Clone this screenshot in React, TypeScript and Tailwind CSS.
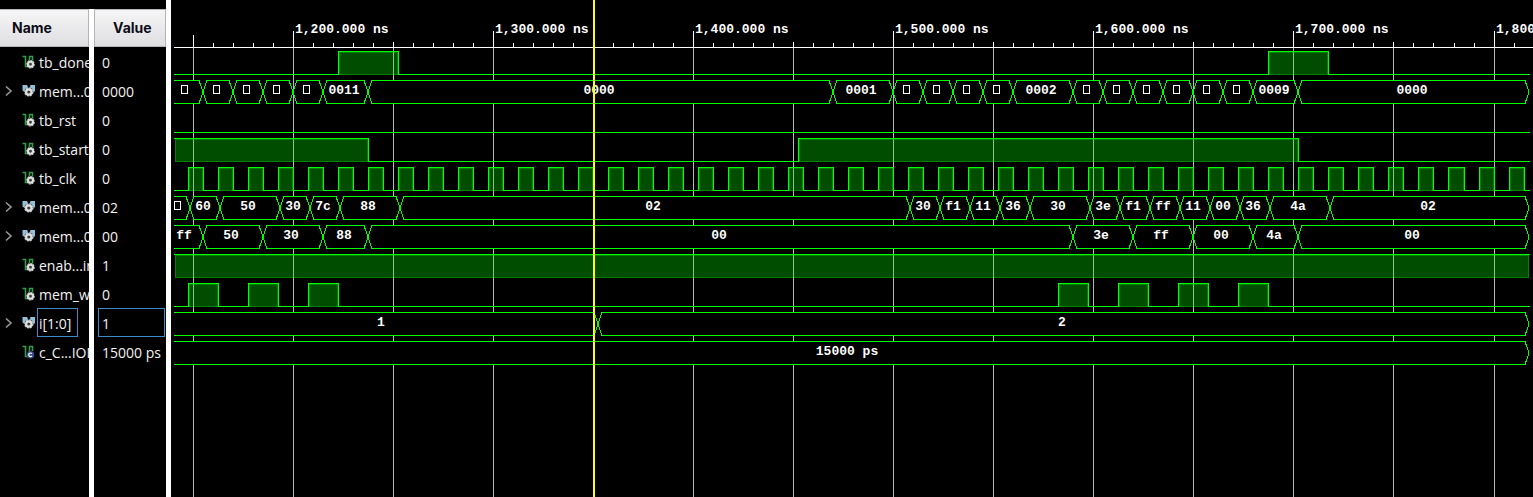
import React from "react";

type Kind = "wire" | "bus" | "const";

type Signal = {
  name: string;
  value: string;
  kind: Kind;
  selected?: boolean;
  pulses?: [number, number][];
  edges?: number[];
  values?: string[];
};

const START = 174;
const END = 1529;
const BOX = "";

const clockPulses: [number, number][] = Array.from({ length: 45 }, (_, k) => {
  const x = 188 + 30 * k + (k > 42 ? 1 : 0);
  return [x, k === 42 ? x + 16 : x + 15];
});

const signals: Signal[] = [
  { name: "tb_done", value: "0", kind: "wire", pulses: [[338, 398], [1268, 1328]] },
  {
    name: "mem...0",
    value: "0000",
    kind: "bus",
    edges: [203, 233, 263, 293, 323, 368, 833, 893, 923, 953, 983, 1013, 1073, 1103, 1133, 1163, 1193, 1223, 1253, 1298],
    values: [BOX, BOX, BOX, BOX, BOX, "0011", "0000", "0001", BOX, BOX, BOX, BOX, "0002", BOX, BOX, BOX, BOX, BOX, BOX, "0009", "0000"],
  },
  { name: "tb_rst", value: "0", kind: "wire", pulses: [] },
  { name: "tb_start", value: "0", kind: "wire", pulses: [[START, 368], [798, 1298]] },
  { name: "tb_clk", value: "0", kind: "wire", pulses: clockPulses },
  {
    name: "mem...0",
    value: "02",
    kind: "bus",
    edges: [190, 220, 280, 310, 340, 400, 910, 940, 970, 1000, 1030, 1090, 1120, 1150, 1180, 1210, 1240, 1270, 1330],
    values: [BOX, "60", "50", "30", "7c", "88", "02", "30", "f1", "11", "36", "30", "3e", "f1", "ff", "11", "00", "36", "4a", "02"],
  },
  {
    name: "mem...0",
    value: "00",
    kind: "bus",
    edges: [203, 263, 323, 368, 1073, 1133, 1193, 1253, 1298],
    values: ["ff", "50", "30", "88", "00", "3e", "ff", "00", "4a", "00"],
  },
  { name: "enab...in", value: "1", kind: "wire", pulses: [[START, END]] },
  {
    name: "mem_wr",
    value: "0",
    kind: "wire",
    pulses: [[188, 218], [248, 278], [308, 338], [1058, 1088], [1118, 1148], [1178, 1208], [1238, 1268]],
  },
  { name: "i[1:0]", value: "1", kind: "bus", selected: true, edges: [598], values: ["1", "2"] },
  { name: "c_C...IOD", value: "15000 ps", kind: "const", edges: [], values: ["15000 ps"] },
];

function SignalIcon({ kind }: { kind: Kind }) {
  if (kind === "bus") {
    return (
      <svg className="h-[14px] w-[14px] shrink-0" viewBox="0 0 14 14" aria-hidden="true">
        <path d="M0.5 1H5L6.5 4V8H2.5L0.5 6.5Z" fill="#93bfd8" />
        <path d="M8.5 1H13V7L11 9L7.5 8V4Z" fill="#93bfd8" />
        <circle cx="6.8" cy="8" r="4.6" fill="#3a3f44" />
        <circle cx="6.8" cy="8" r="4" fill="none" stroke="#c4c4c4" strokeWidth="1.2" strokeDasharray="1.8 1.3" />
        <circle cx="6.8" cy="8" r="2.7" fill="none" stroke="#e0e0e0" strokeWidth="2.2" />
      </svg>
    );
  }
  return (
    <svg className="h-[14px] w-[14px] shrink-0" viewBox="0 0 14 14" aria-hidden="true">
      <path d="M0.5 1.5H3.5V11.5H7.5V1.5H10.5V6" fill="none" stroke="#349c4a" strokeWidth="1.6" />
      {kind === "const" ? (
        <>
          <circle cx="8.5" cy="9.8" r="3.8" fill="#3a4c8c" />
          <path d="M9.9 8.6A1.8 1.8 0 1 0 9.9 11" fill="none" stroke="#fff" strokeWidth="1.2" />
        </>
      ) : (
        <>
          <circle cx="8.5" cy="9.3" r="4.2" fill="#3a3f3a" />
          <circle cx="8.5" cy="9.3" r="3.7" fill="none" stroke="#c4c4c4" strokeWidth="1.1" strokeDasharray="1.6 1.2" />
          <circle cx="8.5" cy="9.3" r="2.5" fill="none" stroke="#e0e0e0" strokeWidth="2.1" />
        </>
      )}
    </svg>
  );
}

function SignalTable() {
  const head =
    "overflow-hidden whitespace-nowrap border border-[#b4b4b8] bg-linear-to-b from-[#f5f5f5] to-[#dfdfe2] font-['Inter',sans-serif] text-sm font-bold text-[#0c0c18]";
  return (
    <table className="h-full w-[166px] table-fixed border-separate border-spacing-0 font-['Open_Sans',sans-serif] text-sm text-[#f2f2f2]">
      <thead>
        <tr className="h-[38px]">
          <th scope="col" className="w-[94px] border-r-[5px] border-white p-0">
            <div className={`${head} flex h-[38px] items-center border-l-0 pl-3`}>Name</div>
          </th>
          <th scope="col" className="w-[72px] p-0">
            <div className={`${head} flex h-[38px] items-center pl-[18px]`}>Value</div>
          </th>
        </tr>
      </thead>
      <tbody>
        {signals.map((s, i) => (
          <tr key={i} className="h-[29px]">
            <td className="border-r-[5px] border-white p-0">
              <div className="flex h-[29px] items-center overflow-hidden whitespace-nowrap">
                <span className="flex w-[22px] shrink-0 pl-[5px]">
                  {s.kind === "bus" && (
                    <button type="button" aria-label="Expand" className="block">
                      <svg className="block h-3 w-2" viewBox="0 0 8 12" aria-hidden="true">
                        <path d="M1 1.5L6 6L1 10.5" fill="none" stroke="#9a9a9a" strokeWidth="1.6" />
                      </svg>
                    </button>
                  )}
                </span>
                <SignalIcon kind={s.kind} />
                <span
                  className={`ml-px flex h-[29px] shrink-0 items-center border pl-px pr-1.5 pt-0.5 ${
                    s.selected ? "border-[#3c8ccc]" : "border-transparent"
                  }`}
                >
                  {s.name}
                </span>
              </div>
            </td>
            <td className="p-0 pl-1 pr-px">
              <div
                className={`flex h-[29px] items-center whitespace-nowrap border pl-[3px] pt-0.5 ${
                  s.selected ? "border-[#3c8ccc]" : "border-transparent"
                }`}
              >
                {s.value}
              </div>
            </td>
          </tr>
        ))}
        <tr aria-hidden="true">
          <td className="border-r-[5px] border-white p-0" />
          <td className="p-0" />
        </tr>
      </tbody>
    </table>
  );
}

const gridX = (n: number) => 193 + 100 * n + (n >= 13 ? 1 : 0);

function Ruler() {
  const ticks = Array.from({ length: 67 }, (_, k) => k).filter((k) => k % 5 !== 0);
  return (
    <g>
      {Array.from({ length: 14 }, (_, n) => {
        const x = gridX(n);
        const top = n === 0 ? 35 : n % 2 === 1 ? 31 : 42;
        return (
          <g key={n}>
            <rect x={x} y={top} width={1} height={48 - top} fill="#fff" />
            <rect x={x} y={48} width={1} height="100%" fill="#b8b8b8" />
            {n % 2 === 1 && (
              <text x={x + 2} y={33} fill="#fff">
                {`1,${2 + (n - 1) / 2}00.000 ns`}
              </text>
            )}
          </g>
        );
      })}
      {ticks.map((k) => (
        <rect key={k} x={193 + 20 * k + (k >= 63 ? 1 : 0)} y={43} width={1} height={4} fill="#fff" />
      ))}
      <rect x={START} y={47} width="100%" height={1} fill="#fff" />
    </g>
  );
}

function WireTrace({ top, pulses }: { top: number; pulses: [number, number][] }) {
  const low = top + 23;
  let d = "";
  let x = START;
  pulses.forEach(([a, b]) => {
    if (a > x) d += `M${x} ${low + 0.5}H${a + 0.5}V${top + 0.5}`;
    else d += `M${a} ${top + 0.5}`;
    d += `H${b + 0.5}`;
    if (b < END) d += `V${low + 0.5}`;
    x = b;
  });
  if (x < END) d += `M${x} ${low + 0.5}H${END + 1}`;
  return (
    <g>
      {pulses.map(([a, b]) => (
        <g key={a}>
          <rect x={a + 1} y={top + 1} width={b - a - 1} height={23} fill="#00ff00" fillOpacity={0.3} />
          <rect
            x={a + 1.5}
            y={top + 1.5}
            width={b - a - 2}
            height={22}
            fill="none"
            stroke="#00ff00"
            strokeOpacity={0.3}
          />
        </g>
      ))}
      <path d={d} fill="none" stroke="#00ff00" />
    </g>
  );
}

function BusTrace({ top, edges, values }: { top: number; edges: number[]; values: string[] }) {
  const t = top + 0.5;
  const m = top + 12;
  const l = top + 23.5;
  const stops = [START, ...edges, END];
  return (
    <g>
      {values.map((v, i) => {
        const a = stops[i];
        const b = stops[i + 1];
        const right = `H${b - 4}L${b} ${m}L${b - 4} ${l}`;
        const center = Math.round(((i === 0 ? 168 : a) + b) / 2) - 2;
        return (
          <g key={i}>
            {i === 0 ? (
              <path d={`M${a} ${t}${right}H${a}`} fill="#000" stroke="#00ff00" />
            ) : (
              <path d={`M${a + 4} ${t}${right}H${a + 4}L${a} ${m}Z`} fill="#000" stroke="#00ff00" />
            )}
            {v === BOX ? (
              <rect x={center - 2.5} y={top + 5.5} width={6} height={8} fill="none" stroke="#fff" />
            ) : (
              <text x={center} y={top + 14} textAnchor="middle" fill="#fff">
                {v}
              </text>
            )}
          </g>
        );
      })}
    </g>
  );
}

export default function App() {
  return (
    <div className="flex h-screen min-h-[380px] overflow-hidden bg-black">
      <aside className="shrink-0 border-r-[5px] border-white pt-[9px]">
        <SignalTable />
      </aside>
      <main className="min-w-0 flex-1 overflow-hidden">
        <svg
          className="block h-full w-full font-['Liberation_Mono',monospace] text-[13px] font-bold"
          fill="currentColor"
          shapeRendering="crispEdges"
          role="img"
          aria-label="Waveforms"
        >
          <g transform="translate(-171 0)">
            <Ruler />
            {signals.map((s, i) =>
              s.kind === "wire" ? (
                <WireTrace key={i} top={51 + 29 * i} pulses={s.pulses ?? []} />
              ) : (
                <BusTrace key={i} top={51 + 29 * i} edges={s.edges ?? []} values={s.values ?? []} />
              ),
            )}
            <rect x={593} y={0} width={2} height="100%" fill="#ffff00" />
          </g>
        </svg>
      </main>
    </div>
  );
}
